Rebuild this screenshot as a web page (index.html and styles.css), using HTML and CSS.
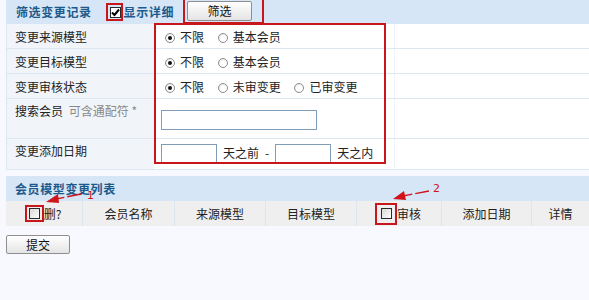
FILE: index.html
```html
<!DOCTYPE html>
<html lang="zh-CN">
<head>
    <meta charset="UTF-8">
    <title>会员模型变更</title>
    <link rel="stylesheet" href="styles.css">
</head>
<body>
    <div class="page">
        <!-- filter block -->
        <div class="filter-wrap">
            <div class="bar">
                <span class="bar-title">筛选变更记录</span>
                <span class="mark mark-check"><span class="cbox checked"><svg width="9" height="9" viewBox="0 0 9 9"><path d="M1 4.5 L3.5 7 L8 1.5" fill="none" stroke="#000" stroke-width="2"/></svg></span></span>
                <span class="bar-title">显示详细</span>
                <span class="mark mark-btn"><button type="button" class="btn">筛选</button></span>
            </div>
            <table class="filter">
                <tr>
                    <td class="lbl">变更来源模型</td>
                    <td class="opt">
                        <span class="radio on"></span>不限
                        <span class="radio sp"></span>基本会员
                    </td>
                    <td class="rest"></td>
                </tr>
                <tr>
                    <td class="lbl">变更目标模型</td>
                    <td class="opt">
                        <span class="radio on"></span>不限
                        <span class="radio sp"></span>基本会员
                    </td>
                    <td class="rest"></td>
                </tr>
                <tr>
                    <td class="lbl">变更审核状态</td>
                    <td class="opt">
                        <span class="radio on"></span>不限
                        <span class="radio sp"></span>未审变更
                        <span class="radio sp"></span>已审变更
                    </td>
                    <td class="rest"></td>
                </tr>
                <tr class="tall">
                    <td class="lbl top">搜索会员 <span class="hint">可含通配符 *</span></td>
                    <td class="opt"><input type="text" class="field wide"></td>
                    <td class="rest"></td>
                </tr>
                <tr class="date">
                    <td class="lbl top">变更添加日期</td>
                    <td class="opt">
                        <input type="text" class="field short"><span class="unit">天之前</span><span class="dash">-</span><input type="text" class="field short"><span class="unit">天之内</span>
                    </td>
                    <td class="rest"></td>
                </tr>
            </table>
            <div class="hl-box"></div>
        </div>

        <!-- list block -->
        <div class="bar list-bar">
            <span class="bar-title">会员模型变更列表</span>
        </div>
        <div class="cols">
            <div class="col c1"><span class="mark mark-sm"><span class="cbox"></span></span>删?</div>
            <div class="col c2">会员名称</div>
            <div class="col c3">来源模型</div>
            <div class="col c4">目标模型</div>
            <div class="col c5"><span class="mark mark-sm2"><span class="cbox"></span></span>审核</div>
            <div class="col c6">添加日期</div>
            <div class="col c7">详情</div>
        </div>

        <div class="actions">
            <button type="button" class="btn submit">提交</button>
        </div>
        <div class="foot-line"></div>
    </div>

    <!-- annotation arrows -->
    <svg class="notes" width="589" height="300" viewBox="0 0 589 300">
        <line x1="81" y1="194" x2="56" y2="199" stroke="#d0141c" stroke-width="1.3" stroke-dasharray="14 3"/>
        <polygon points="46,202 58,194 59,203" fill="#d0141c"/>
        <line x1="429" y1="191" x2="403" y2="196" stroke="#d0141c" stroke-width="1.3" stroke-dasharray="14 3"/>
        <polygon points="393,199 404,191 406,200" fill="#d0141c"/>
    </svg>
    <span class="num num1">1</span>
    <span class="num num2">2</span>
</body>
</html>
```

FILE: styles.css
```css
/* General */
body {
    margin: 0;
    background-color: #f8f9fe;
    font-family: "Noto Sans CJK SC", "DejaVu Sans", sans-serif;
    font-size: 12px;
    color: #222;
    width: 589px;
    height: 300px;
    overflow: hidden;
    position: relative;
}

.page {
    padding-left: 6px;
}

/* Blue title bars */
.bar {
    display: flex;
    align-items: center;
    height: 24px;
    padding-left: 10px;
    background: #d6e6f6;
}

.bar-title {
    font-weight: bold;
    color: #1d5a8c;
    letter-spacing: 0.6px;
    line-height: 14px;
}

.bar-title:first-child {
    margin-right: 14px;
}

.list-bar {
    height: 25px;
    padding-left: 9px;
    margin-top: 6px;
}

/* red annotation frames */
.mark {
    display: inline-flex;
    align-items: center;
    border: 2px solid #c8161d;
    box-sizing: border-box;
}

.mark-check {
    width: 17px;
    height: 18px;
    padding-left: 2px;
    margin-right: 1px;
}

.mark-btn {
    width: 81px;
    height: 25px;
    margin-left: 9px;
    margin-top: -1px;
    padding-left: 2px;
    border-top: none;
}

.mark-sm {
    width: 19px;
    height: 17px;
    padding-left: 2px;
    margin-left: -2px;
}

.mark-sm2 {
    width: 22px;
    height: 22px;
    padding-left: 4px;
    margin-left: -2px;
}

/* checkbox + radio drawn by hand */
.cbox {
    display: inline-flex;
    align-items: center;
    justify-content: center;
    width: 11px;
    height: 11px;
    box-sizing: border-box;
    border: 1px solid #2a2a2a;
    background: linear-gradient(135deg, #d8d8d8, #ffffff);
}

.cbox.checked {
    background: #fff;
}

.radio {
    display: inline-block;
    width: 10px;
    height: 10px;
    box-sizing: border-box;
    border: 1px solid #8d8d8d;
    border-radius: 50%;
    background: radial-gradient(circle at 60% 60%, #ffffff 40%, #dcdcdc);
    margin-right: 5px;
    vertical-align: -1px;
    position: relative;
}

.radio.on {
    margin-left: 4px;
}

.radio.on::after {
    content: "";
    position: absolute;
    left: 2px;
    top: 2px;
    width: 4px;
    height: 4px;
    border-radius: 50%;
    background: #111;
}

.radio.sp {
    margin-left: 11px;
}

/* Buttons */
.btn {
    width: 65px;
    height: 20px;
    padding: 0;
    font-family: inherit;
    font-size: 12px;
    color: #111;
    background: linear-gradient(#ffffff, #e4e4e4);
    border: 1px solid #8f8f8f;
    border-radius: 2px;
    line-height: 18px;
}

/* Filter table */
.filter-wrap {
    position: relative;
}

.filter {
    width: 583px;
    border-collapse: collapse;
    border-left: 1px solid #dde7f1;
}

.filter td {
    height: 24px;
    padding: 0;
    border-bottom: 1px solid #dde7f1;
}

.filter .lbl {
    width: 139px;
    padding-left: 8px;
    background: #f1f5fa;
    color: #222;
}

.filter .top {
    vertical-align: top;
    padding-top: 3px;
}

.filter .opt {
    width: 233px;
    padding-left: 7px;
    background: #fff;
    white-space: nowrap;
}

.filter .rest {
    background: #fff;
    border-left: 1px solid #f0f4f8;
}

.filter .tall td {
    height: 36px;
}

.filter .date td {
    height: 27px;
}

.hint {
    color: #888;
    margin-left: 3px;
}

.field {
    height: 20px;
    box-sizing: border-box;
    border: 1px solid #7f9db9;
    background: #fff;
    padding: 0 2px;
    vertical-align: middle;
}

.wide {
    width: 156px;
    margin-top: 3px;
}

.short {
    width: 56px;
}

.unit {
    margin-left: 6px;
}

.dash {
    margin: 0 6px;
}

.hl-box {
    position: absolute;
    left: 148px;
    top: 23px;
    width: 232px;
    height: 141px;
    border: 2px solid #c8161d;
    box-sizing: border-box;
}

/* list column header */
.cols {
    display: flex;
    height: 25px;
    background: #efefef;
    width: 583px;
}

.col {
    display: flex;
    align-items: center;
    justify-content: center;
    border-right: 1px solid #dde5ee;
    box-sizing: border-box;
    color: #222;
}

.c1 { width: 77px; }
.c2 { width: 92px; }
.c3 { width: 91px; }
.c4 { width: 91px; }
.c5 { width: 85px; }
.c6 { width: 90px; }
.c7 { width: 57px; border-right: none; }

.actions {
    padding-top: 9px;
}

.submit {
    width: 64px;
    height: 19px;
}

.foot-line {
    margin: 47px 0 0 37px;
    width: 443px;
    height: 2px;
    background: #a7c6da;
}

/* annotations */
.notes {
    position: absolute;
    left: 0;
    top: 0;
    pointer-events: none;
}

.num {
    position: absolute;
    font-family: "DejaVu Sans", sans-serif;
    font-size: 11px;
    line-height: 10px;
    color: #d0141c;
}

.num1 {
    left: 87px;
    top: 191px;
}

.num2 {
    left: 433px;
    top: 184px;
}
```
